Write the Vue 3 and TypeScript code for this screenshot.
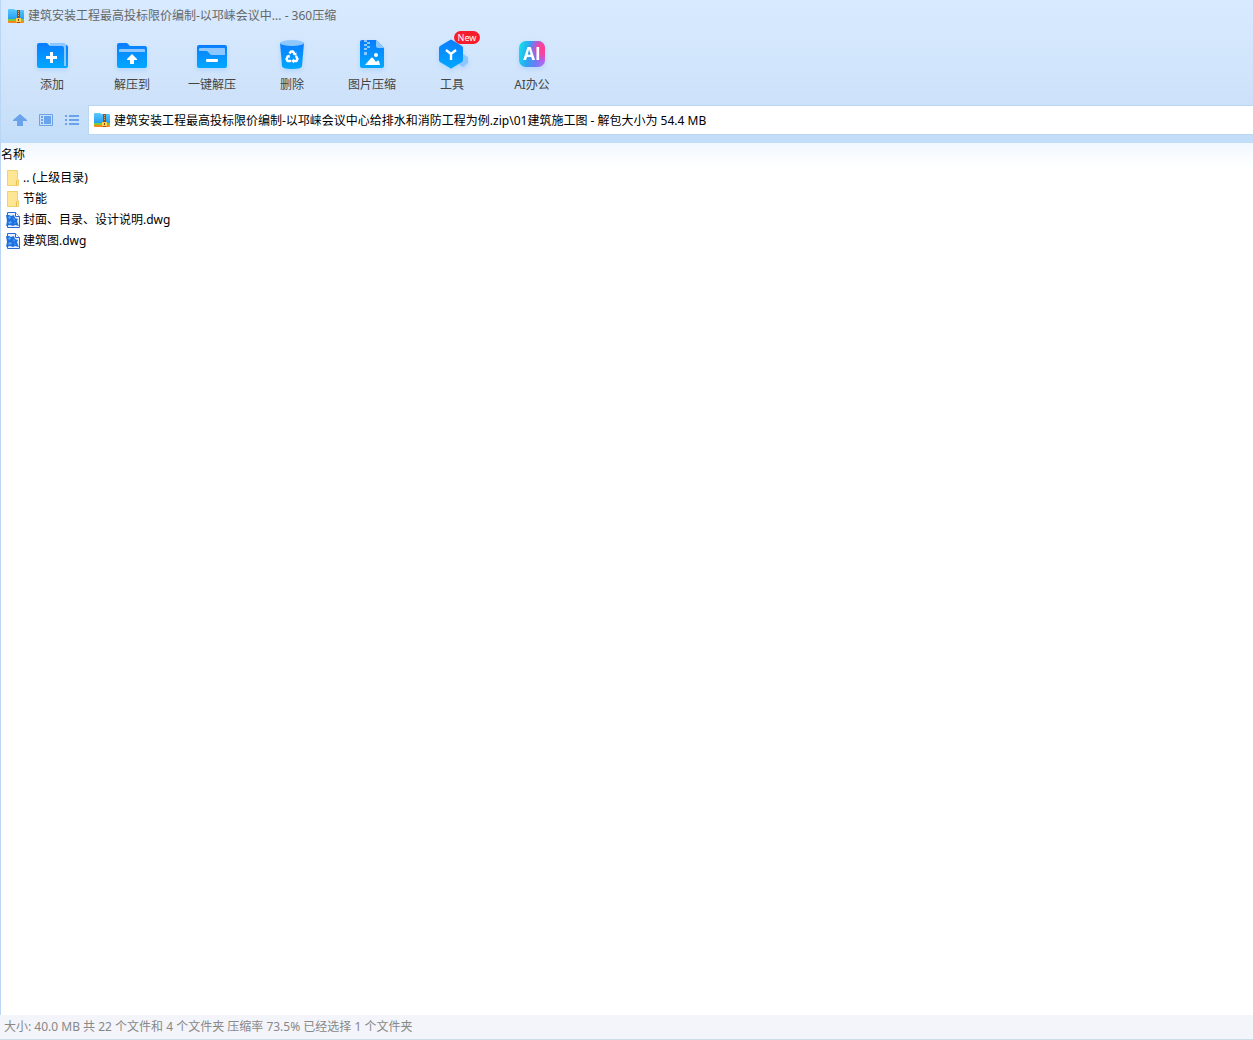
<script setup lang="ts">
import { ref } from 'vue'

type ToolIcon = 'add' | 'extract' | 'oneclick' | 'delete' | 'image' | 'tools' | 'ai'

interface Tool {
  icon: ToolIcon
  label: string
  isNew?: boolean
}

interface Entry {
  kind: 'folder' | 'dwg'
  name: string
}

const tools: Tool[] = [
  { icon: 'add', label: '添加' },
  { icon: 'extract', label: '解压到' },
  { icon: 'oneclick', label: '一键解压' },
  { icon: 'delete', label: '删除' },
  { icon: 'image', label: '图片压缩' },
  { icon: 'tools', label: '工具', isNew: true },
  { icon: 'ai', label: 'AI办公' },
]

const entries: Entry[] = [
  { kind: 'folder', name: '.. (上级目录)' },
  { kind: 'folder', name: '节能' },
  { kind: 'dwg', name: '封面、目录、设计说明.dwg' },
  { kind: 'dwg', name: '建筑图.dwg' },
]

const path = ref(
  '建筑安装工程最高投标限价编制-以邛崃会议中心给排水和消防工程为例.zip\\01建筑施工图 - 解包大小为 54.4 MB',
)
</script>

<template>
  <div class="window">
    <!-- Shared gradients and the archive symbol -->
    <svg class="defs" width="0" height="0" aria-hidden="true">
      <defs>
        <linearGradient id="blue" x1="0" y1="0" x2="0" y2="1">
          <stop offset="0" stop-color="#0a7dff" />
          <stop offset="1" stop-color="#00a8ff" />
        </linearGradient>
        <linearGradient id="sky" x1="0" y1="0" x2="0" y2="1">
          <stop offset="0" stop-color="#5cc8ff" />
          <stop offset="1" stop-color="#1e9cf0" />
        </linearGradient>
        <linearGradient id="ai-base" x1="0" y1="0.4" x2="1" y2="0.6">
          <stop offset="0" stop-color="#16dcec" />
          <stop offset="0.35" stop-color="#2aa5f2" />
          <stop offset="0.7" stop-color="#6a7cf4" />
          <stop offset="1" stop-color="#b56af5" />
        </linearGradient>
        <radialGradient id="ai-glow" cx="0.95" cy="0.3" r="0.6">
          <stop offset="0" stop-color="#ff3d8e" />
          <stop offset="0.4" stop-color="#f046a8" />
          <stop offset="1" stop-color="#b050f0" stop-opacity="0" />
        </radialGradient>
        <symbol id="archive" viewBox="0 0 16 14">
          <path d="M0 1q0-1 1-1h5l1 1h8q1 0 1 1v9H0z" fill="url(#sky)" />
          <path d="M0 10h16v2H0z" fill="#7ccb3c" />
          <path d="M0 12h16v1q0 1-1 1H1q-1 0-1-1z" fill="#f8861c" />
          <path d="M9 1h3v13H9z" fill="#a04a1a" />
          <path d="M10 2h1v1h-1zM10 4h1v1h-1zM10 6h1v1h-1z" fill="#e3a65c" />
          <path d="M8 9h5v4H8z" fill="#ffd052" />
          <path d="M10 10h1v2h-1z" fill="#8a4014" />
        </symbol>
      </defs>
    </svg>

    <header class="chrome">
      <div class="titlebar">
        <svg class="archive-icon" width="16" height="14" aria-hidden="true"><use href="#archive" /></svg>
        <h1 class="title">建筑安装工程最高投标限价编制-以邛崃会议中... - 360压缩</h1>
      </div>

      <nav class="toolbar">
        <button v-for="tool in tools" :key="tool.icon" type="button" class="tool">
          <svg class="tool-icon" width="32" height="34" viewBox="0 0 32 34" aria-hidden="true">
            <g v-if="tool.icon === 'add'">
              <path d="M20 7h10q2 0 2 2v19q0 2-2 2H20z" fill="url(#blue)" />
              <path d="M14 5h13q3 0 3 3v20h-4V8H14z" fill="#8cc8ff" />
              <path d="M1 7q0-2 2-2h8l3 3h12q2 0 2 2v20H3q-2 0-2-2z" fill="url(#blue)" />
              <path d="M14 14h3v4h4v3h-4v4h-3v-4h-4v-3h4z" fill="#fff" />
            </g>
            <g v-else-if="tool.icon === 'extract'">
              <path d="M1 7q0-2 2-2h8l3 3h15q2 0 2 2v18q0 2-2 2H3q-2 0-2-2z" fill="url(#blue)" />
              <path d="M3 14v-2q0-1 1-1h24q1 0 1 1v2z" fill="#8cc8ff" />
              <path d="M16 16l5 5v1h-3v4h-4v-4h-3v-1z" fill="#fff" />
            </g>
            <g v-else-if="tool.icon === 'oneclick'">
              <rect x="1" y="7" width="30" height="23" rx="2" fill="url(#blue)" />
              <path d="M3 13v-2q0-1 1-1h24q1 0 1 1v6H16q-2 0-3-2l-2-2z" fill="#8cc8ff" />
              <rect x="10" y="21" width="12" height="3" rx="1" fill="#fff" />
            </g>
            <g v-else-if="tool.icon === 'delete'">
              <path d="M4 5h24l-2 23q0 3-10 3T6 28z" fill="url(#blue)" />
              <ellipse cx="16" cy="5" rx="12" ry="3" fill="#8cc8ff" />
              <g fill="none" stroke="#fff" stroke-width="2.400" stroke-linejoin="round">
                <path d="M13.500 15.500l1.500-2h2l2 3" />
                <path d="M20 18l1.500 3-1 2H17" />
                <path d="M15 23h-3.500l-1-2 1.500-3" />
              </g>
              <path d="M17 16.500l3.500-2v3.500zM18 20.500v5l-3-2.500zM10 18l3.500-1.500.5 3.500z" fill="#fff" />
            </g>
            <g v-else-if="tool.icon === 'image'">
              <path d="M4 4q0-2 2-2h14l8 8v18q0 2-2 2H6q-2 0-2-2z" fill="url(#blue)" />
              <path d="M20 2v6q0 2 2 2h6z" fill="#8cc8ff" />
              <path d="M8 2h3v2H8zM11 4h3v2h-3zM8 6h3v2H8zM11 8h3v2h-3zM8 10h3v2H8zM8 14h3v3H8z" fill="#8cc8ff" />
              <circle cx="20" cy="17" r="2" fill="#fff" />
              <path d="M9 27l6-7q1-1 2 0l3 4 1-1q1-1 2 0l1 4z" fill="#fff" />
            </g>
            <g v-else-if="tool.icon === 'tools'">
              <path d="M27 16l5 3v6l-5 4-6-4v-6z" fill="#8cc8ff" />
              <path d="M14 2q1-1 2 0l10 6q1 1 1 2v12q0 1-1 2l-10 6q-1 1-2 0L4 24q-1-1-1-2V10q0-1 1-2z" fill="url(#blue)" />
              <path d="M10 12l5 4 5-4M15 16v6" fill="none" stroke="#fff" stroke-width="2.400" />
            </g>
            <g v-else>
              <rect x="3" y="3" width="26" height="26" rx="7" fill="url(#ai-base)" />
              <rect x="3" y="3" width="26" height="26" rx="7" fill="url(#ai-glow)" />
              <text class="ai-text" x="16" y="22" text-anchor="middle">AI</text>
            </g>
          </svg>
          <span class="tool-label">{{ tool.label }}</span>
          <span v-if="tool.isNew" class="badge">New</span>
        </button>
      </nav>

      <div class="address-row">
        <div class="nav-buttons">
          <button type="button" class="nav-button" aria-label="向上">
            <svg width="16" height="16" viewBox="0 0 16 16"><path d="M8 2l7 6v1h-4v5H5V9H1V8z" fill="#6aa2ec" /></svg>
          </button>
          <button type="button" class="nav-button" aria-label="预览">
            <svg width="16" height="16" viewBox="0 0 16 16">
              <path d="M1.500 2.500h13v11h-13z" fill="none" stroke="#6aa2ec" />
              <path d="M3 4h2v2H3zM3 7h2v2H3zM3 10h2v2H3zM6 4h7v8H6z" fill="#6aa2ec" />
            </svg>
          </button>
          <button type="button" class="nav-button" aria-label="列表">
            <svg width="16" height="16" viewBox="0 0 16 16">
              <path d="M1 3h2v2H1zM5 3h10v2H5zM1 7h2v2H1zM5 7h10v2H5zM1 11h2v2H1zM5 11h10v2H5z" fill="#6aa2ec" />
            </svg>
          </button>
        </div>
        <label class="address">
          <svg class="archive-icon" width="16" height="14" aria-hidden="true"><use href="#archive" /></svg>
          <input v-model="path" class="address-input" type="text" aria-label="路径" />
        </label>
      </div>
    </header>

    <main class="content">
      <table class="files">
        <thead>
          <tr>
            <th scope="col">名称</th>
          </tr>
        </thead>
        <tbody>
          <tr v-for="entry in entries" :key="entry.name">
            <td>
              <div class="entry">
                <svg v-if="entry.kind === 'folder'" width="16" height="16" viewBox="0 0 16 16" aria-hidden="true">
                  <path d="M2 0h11v9l1 1v6H2z" fill="#ffe694" />
                  <path d="M2.500.5h10v8.500l1 1v5.500h-11z" fill="none" stroke="#f0d070" />
                  <path d="M11.500 15.500V11l1-1" fill="none" stroke="#e6c050" />
                </svg>
                <svg v-else width="16" height="16" viewBox="0 0 16 16" aria-hidden="true">
                  <path d="M2.500.5h8l4 4v11h-12z" fill="#e6f1ff" stroke="#2a68d8" />
                  <path d="M10.500.5v4h4" fill="#fff" stroke="#2a68d8" />
                  <path d="M1 3h3l2 1 3-1 1 3 3 1-1 2 1 3 1 2-4-1-2 1-3-1-4 1 1-5z" fill="#1e6fe0" />
                  <path d="M3 5l2-1 1 2-2 1zM8 6l2 1-1 2zM3 10l3-1 1 2-3 1zM9 10l2 1-1 1z" fill="#58a6f8" />
                </svg>
                <span>{{ entry.name }}</span>
              </div>
            </td>
          </tr>
        </tbody>
      </table>
    </main>

    <footer class="status">大小: 40.0 MB 共 22 个文件和 4 个文件夹 压缩率 73.5% 已经选择 1 个文件夹</footer>
  </div>
</template>

<style>
body {
  margin: 0;
}
</style>

<style scoped>
.window {
  display: flex;
  flex-direction: column;
  min-height: 100vh;
  background: #fff;
  color: #000;
  font-family: 'Noto Sans', 'Noto Sans CJK SC', sans-serif;
  font-size: 12px;
  line-height: 16px;
}

.defs {
  position: absolute;
}

button {
  padding: 0;
  border: 0;
  background: none;
  color: inherit;
  font: inherit;
}

.chrome {
  display: flex;
  flex-direction: column;
  padding-bottom: 9px;
  border-left: 1px solid #b9d6f5;
  background: linear-gradient(#d8eaff, #cde2fa 70%, #c2ddf9);
}

.titlebar {
  display: flex;
  align-items: center;
  gap: 4px;
  height: 31px;
  padding-left: 7px;
}

.archive-icon {
  flex: none;
}

.title {
  margin: 0;
  color: #666;
  font-size: 12px;
  font-weight: 400;
  white-space: nowrap;
}

.toolbar {
  display: flex;
  height: 75px;
  padding-left: 11px;
}

.tool {
  position: relative;
  display: flex;
  flex-direction: column;
  align-items: center;
  width: 80px;
  padding-top: 7px;
  color: #444;
}

.tool-icon {
  margin-bottom: 5px;
  filter: drop-shadow(0 2px 2px rgba(0, 120, 255, 0.15));
}

.tool-label {
  white-space: nowrap;
}

.ai-text {
  fill: #fff;
  font-family: 'Open Sans', sans-serif;
  font-size: 17px;
  font-weight: 700;
}

.badge {
  position: absolute;
  top: 0;
  left: 42px;
  width: 26px;
  border-radius: 7px;
  background: #f81d2c;
  color: #fff;
  font-size: 9px;
  line-height: 13px;
  text-align: center;
}

.address-row {
  display: flex;
  align-items: center;
  height: 28px;
}

.nav-buttons {
  display: flex;
  gap: 10px;
  padding: 0 9px 0 11px;
}

.nav-button,
.nav-button svg {
  display: block;
  width: 16px;
  height: 16px;
}

.address {
  display: flex;
  flex: 1;
  align-items: center;
  gap: 4px;
  height: 28px;
  padding-left: 5px;
  background: #fff;
  box-shadow: 0 0 0 1px #b9d6f3;
}

.address-input {
  flex: 1;
  min-width: 0;
  height: 28px;
  padding: 0;
  border: 0;
  outline: none;
  background: none;
  color: #000;
  font: inherit;
}

.content {
  flex: 1;
  border-left: 1px solid #b9d6f5;
}

.files {
  width: 100%;
  border-collapse: collapse;
}

.files th {
  height: 24px;
  padding: 0;
  background: linear-gradient(#f1f7ff, #fff);
  font-weight: 400;
  text-align: left;
}

.files td {
  height: 21px;
  padding: 0;
}

.entry {
  display: flex;
  align-items: center;
  gap: 2px;
  padding-left: 4px;
}

.status {
  padding: 4px;
  border-bottom: 1px solid #cbdde8;
  background: #f3f5fa;
  color: #888;
}
</style>
